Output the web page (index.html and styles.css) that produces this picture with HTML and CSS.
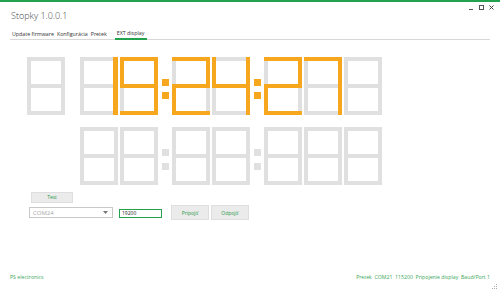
FILE: index.html
```html
<!DOCTYPE html>
<html lang="sk">
<head>
<meta charset="utf-8">
<title>Stopky 1.0.0.1</title>
<link rel="stylesheet" href="styles.css">
</head>
<body>
<div class="window">
  <div class="accent"></div>
  <header class="titlebar">
    <span class="title">Stopky 1.0.0.1</span>
    <div class="winctl">
      <svg width="5" height="5" viewBox="0 0 5 5"><rect x="0" y="4" width="4" height="1" fill="#555"/></svg>
      <svg width="5" height="5" viewBox="0 0 5 5"><rect x="0.5" y="0.5" width="4" height="4" fill="none" stroke="#555" stroke-width="1"/></svg>
      <svg width="5" height="5" viewBox="0 0 5 5"><path d="M0.5 0.5 L4.5 4.5 M4.5 0.5 L0.5 4.5" stroke="#444" stroke-width="1"/></svg>
    </div>
  </header>
  <nav class="tabs">
    <span class="tab">Update firmware</span>
    <span class="tab">Konfigurácia</span>
    <span class="tab">Pretek</span>
    <span class="tab active">EXT display</span>
  </nav>
  <main class="content">
    <div class="display">
      <div class="row">
        <svg class="digit first" viewBox="0 0 38 58"><g class="off"><rect x="0" y="0" width="38" height="4"/><rect x="34" y="0" width="4" height="31"/><rect x="34" y="27" width="4" height="31"/><rect x="0" y="54" width="38" height="4"/><rect x="0" y="27" width="4" height="31"/><rect x="0" y="0" width="4" height="31"/><rect x="0" y="27" width="38" height="4"/></g></svg>
        <svg class="digit" viewBox="0 0 38 58"><g class="off"><rect x="0" y="0" width="38" height="4"/><rect x="34" y="0" width="4" height="31"/><rect x="34" y="27" width="4" height="31"/><rect x="0" y="54" width="38" height="4"/><rect x="0" y="27" width="4" height="31"/><rect x="0" y="0" width="4" height="31"/><rect x="0" y="27" width="38" height="4"/></g><g class="on"><rect x="33" y="0" width="5" height="31"/><rect x="33" y="27" width="5" height="31"/></g></svg>
        <svg class="digit" viewBox="0 0 38 58"><g class="off"><rect x="0" y="0" width="38" height="4"/><rect x="34" y="0" width="4" height="31"/><rect x="34" y="27" width="4" height="31"/><rect x="0" y="54" width="38" height="4"/><rect x="0" y="27" width="4" height="31"/><rect x="0" y="0" width="4" height="31"/><rect x="0" y="27" width="38" height="4"/></g><g class="on"><rect x="0" y="0" width="38" height="4"/><rect x="34" y="0" width="4" height="31"/><rect x="34" y="27" width="4" height="31"/><rect x="0" y="54" width="38" height="4"/><rect x="0" y="0" width="4" height="31"/><rect x="0" y="27" width="38" height="4"/></g></svg>
        <svg class="colon" viewBox="0 0 7 58"><rect class="on-dot" x="0" y="22" width="7" height="7"/><rect class="on-dot" x="0" y="35" width="7" height="7"/></svg>
        <svg class="digit" viewBox="0 0 38 58"><g class="off"><rect x="0" y="0" width="38" height="4"/><rect x="34" y="0" width="4" height="31"/><rect x="34" y="27" width="4" height="31"/><rect x="0" y="54" width="38" height="4"/><rect x="0" y="27" width="4" height="31"/><rect x="0" y="0" width="4" height="31"/><rect x="0" y="27" width="38" height="4"/></g><g class="on"><rect x="0" y="0" width="38" height="4"/><rect x="34" y="0" width="4" height="31"/><rect x="0" y="27" width="38" height="4"/><rect x="0" y="27" width="4" height="31"/><rect x="0" y="54" width="38" height="4"/></g></svg>
        <svg class="digit" viewBox="0 0 38 58"><g class="off"><rect x="0" y="0" width="38" height="4"/><rect x="34" y="0" width="4" height="31"/><rect x="34" y="27" width="4" height="31"/><rect x="0" y="54" width="38" height="4"/><rect x="0" y="27" width="4" height="31"/><rect x="0" y="0" width="4" height="31"/><rect x="0" y="27" width="38" height="4"/></g><g class="on"><rect x="0" y="0" width="4" height="31"/><rect x="0" y="27" width="38" height="4"/><rect x="34" y="0" width="4" height="31"/><rect x="34" y="27" width="4" height="31"/></g></svg>
        <svg class="colon" viewBox="0 0 7 58"><rect class="on-dot" x="0" y="22" width="7" height="7"/><rect class="on-dot" x="0" y="35" width="7" height="7"/></svg>
        <svg class="digit" viewBox="0 0 38 58"><g class="off"><rect x="0" y="0" width="38" height="4"/><rect x="34" y="0" width="4" height="31"/><rect x="34" y="27" width="4" height="31"/><rect x="0" y="54" width="38" height="4"/><rect x="0" y="27" width="4" height="31"/><rect x="0" y="0" width="4" height="31"/><rect x="0" y="27" width="38" height="4"/></g><g class="on"><rect x="0" y="0" width="38" height="4"/><rect x="34" y="0" width="4" height="31"/><rect x="0" y="27" width="38" height="4"/><rect x="0" y="27" width="4" height="31"/><rect x="0" y="54" width="38" height="4"/></g></svg>
        <svg class="digit" viewBox="0 0 38 58"><g class="off"><rect x="0" y="0" width="38" height="4"/><rect x="34" y="0" width="4" height="31"/><rect x="34" y="27" width="4" height="31"/><rect x="0" y="54" width="38" height="4"/><rect x="0" y="27" width="4" height="31"/><rect x="0" y="0" width="4" height="31"/><rect x="0" y="27" width="38" height="4"/></g><g class="on"><rect x="0" y="0" width="38" height="4"/><rect x="34" y="0" width="4" height="31"/><rect x="34" y="27" width="4" height="31"/></g></svg>
        <svg class="digit" viewBox="0 0 38 58"><g class="off"><rect x="0" y="0" width="38" height="4"/><rect x="34" y="0" width="4" height="31"/><rect x="34" y="27" width="4" height="31"/><rect x="0" y="54" width="38" height="4"/><rect x="0" y="27" width="4" height="31"/><rect x="0" y="0" width="4" height="31"/><rect x="0" y="27" width="38" height="4"/></g></svg>
      </div>
      <div class="row">
        <svg class="digit first hidden" viewBox="0 0 38 58"></svg>
        <svg class="digit" viewBox="0 0 38 58"><g class="off"><rect x="0" y="0" width="38" height="4"/><rect x="34" y="0" width="4" height="31"/><rect x="34" y="27" width="4" height="31"/><rect x="0" y="54" width="38" height="4"/><rect x="0" y="27" width="4" height="31"/><rect x="0" y="0" width="4" height="31"/><rect x="0" y="27" width="38" height="4"/></g></svg>
        <svg class="digit" viewBox="0 0 38 58"><g class="off"><rect x="0" y="0" width="38" height="4"/><rect x="34" y="0" width="4" height="31"/><rect x="34" y="27" width="4" height="31"/><rect x="0" y="54" width="38" height="4"/><rect x="0" y="27" width="4" height="31"/><rect x="0" y="0" width="4" height="31"/><rect x="0" y="27" width="38" height="4"/></g></svg>
        <svg class="colon" viewBox="0 0 7 58"><rect class="off-dot" x="0" y="22" width="7" height="7"/><rect class="off-dot" x="0" y="36" width="7" height="7"/></svg>
        <svg class="digit" viewBox="0 0 38 58"><g class="off"><rect x="0" y="0" width="38" height="4"/><rect x="34" y="0" width="4" height="31"/><rect x="34" y="27" width="4" height="31"/><rect x="0" y="54" width="38" height="4"/><rect x="0" y="27" width="4" height="31"/><rect x="0" y="0" width="4" height="31"/><rect x="0" y="27" width="38" height="4"/></g></svg>
        <svg class="digit" viewBox="0 0 38 58"><g class="off"><rect x="0" y="0" width="38" height="4"/><rect x="34" y="0" width="4" height="31"/><rect x="34" y="27" width="4" height="31"/><rect x="0" y="54" width="38" height="4"/><rect x="0" y="27" width="4" height="31"/><rect x="0" y="0" width="4" height="31"/><rect x="0" y="27" width="38" height="4"/></g></svg>
        <svg class="colon" viewBox="0 0 7 58"><rect class="off-dot" x="0" y="22" width="7" height="7"/><rect class="off-dot" x="0" y="36" width="7" height="7"/></svg>
        <svg class="digit" viewBox="0 0 38 58"><g class="off"><rect x="0" y="0" width="38" height="4"/><rect x="34" y="0" width="4" height="31"/><rect x="34" y="27" width="4" height="31"/><rect x="0" y="54" width="38" height="4"/><rect x="0" y="27" width="4" height="31"/><rect x="0" y="0" width="4" height="31"/><rect x="0" y="27" width="38" height="4"/></g></svg>
        <svg class="digit" viewBox="0 0 38 58"><g class="off"><rect x="0" y="0" width="38" height="4"/><rect x="34" y="0" width="4" height="31"/><rect x="34" y="27" width="4" height="31"/><rect x="0" y="54" width="38" height="4"/><rect x="0" y="27" width="4" height="31"/><rect x="0" y="0" width="4" height="31"/><rect x="0" y="27" width="38" height="4"/></g></svg>
        <svg class="digit" viewBox="0 0 38 58"><g class="off"><rect x="0" y="0" width="38" height="4"/><rect x="34" y="0" width="4" height="31"/><rect x="34" y="27" width="4" height="31"/><rect x="0" y="54" width="38" height="4"/><rect x="0" y="27" width="4" height="31"/><rect x="0" y="0" width="4" height="31"/><rect x="0" y="27" width="38" height="4"/></g></svg>
      </div>
    </div>
    <div class="controls">
      <button class="btn test">Test</button>
      <div class="connect">
        <div class="combo"><span class="combo-text">COM24</span><svg class="combo-arrow" width="5" height="3" viewBox="0 0 5 3"><path d="M0 0 H5 L2.5 3 Z" fill="#777"/></svg></div>
        <div class="baud">19200</div>
        <button class="btn connect-btn">Pripojiť</button>
        <button class="btn disconnect-btn">Odpojiť</button>
      </div>
    </div>
  </main>
  <footer class="status">
    <span class="brand">PS electronics</span>
    <span class="info">Pretek&nbsp; COM21&nbsp; 115200&nbsp; Pripojenie display&nbsp; Baud/Port 1</span>
  </footer>
  <svg class="grip" width="5" height="5" viewBox="0 0 5 5"><rect x="4" y="0" width="1" height="1" fill="#aaa"/><rect x="2" y="2" width="1" height="1" fill="#aaa"/><rect x="4" y="2" width="1" height="1" fill="#aaa"/><rect x="0" y="4" width="1" height="1" fill="#aaa"/><rect x="2" y="4" width="1" height="1" fill="#aaa"/><rect x="4" y="4" width="1" height="1" fill="#aaa"/></svg>
</div>
</body>
</html>
```
FILE: styles.css
```css
* { box-sizing: border-box; }
html, body { margin: 0; padding: 0; background: #fff; }
body { font-family: "Open Sans", "Noto Sans", sans-serif; color: #333; }

.window {
  position: relative;
  width: 500px;
  height: 292px;
  overflow: hidden;
  display: flex;
  flex-direction: column;
  background: #fff;
}

.accent { height: 2px; background: #22a24c; flex: none; }

.titlebar {
  height: 26px;
  flex: none;
  display: flex;
  justify-content: space-between;
  align-items: flex-start;
  padding: 0 6px 0 11px;
}
.title {
  font-size: 9px;
  line-height: 12px;
  margin-top: 8px;
  color: #444;
  font-weight: 300;
}
.winctl { display: flex; gap: 5px; margin-top: 3px; }
.winctl svg { display: block; }

.tabs {
  flex: none;
  height: 12px;
  margin: 0 10px;
  border-bottom: 1px solid #d8d8d8;
  display: flex;
  align-items: flex-end;
  padding-left: 1px;
}
.tab {
  font-size: 5.3px;
  line-height: 10px;
  color: #333;
  padding: 0 1px;
  margin-right: 1px;
  white-space: nowrap;
}
.tab.active {
  margin-left: 6px;
  padding: 0 3px 0 2px;
  border-bottom: 2px solid #22a24c;
  margin-bottom: -1px;
  line-height: 9px;
}

.content { flex: 1; display: flex; flex-direction: column; }

.display {
  padding: 17px 0 0 27px;
  display: flex;
  flex-direction: column;
  gap: 12px;
}
.row { display: flex; }
.digit { width: 38px; height: 58px; display: block; flex: none; }
.digit + .digit { margin-left: 2px; }
.digit.first { margin-right: 13px; }
.digit.hidden { visibility: hidden; }
.colon { width: 7px; height: 58px; display: block; flex: none; margin: 0 3px 0 4px; }
.off rect { fill: #e0e0e0; }
.on rect { fill: #f7a71d; }
.on-dot { fill: #f7a71d; }
.off-dot { fill: #e0e0e0; }

.controls {
  padding: 7px 0 0 29px;
  display: flex;
  flex-direction: column;
  align-items: flex-start;
  gap: 2px;
}
.btn {
  font-family: "Open Sans", sans-serif;
  font-size: 5px;
  color: #1f9a48;
  background: #ebebeb;
  border: 1px solid #dedede;
  padding: 0;
  margin: 0;
}
.test { width: 42px; height: 11px; margin-left: 2px; line-height: 9px; }

.connect { display: flex; align-items: flex-start; }
.combo {
  width: 84px;
  height: 11px;
  margin-top: 2px;
  border: 1px solid #c8c8c8;
  display: flex;
  align-items: center;
  justify-content: space-between;
  padding: 0 4px 0 3px;
  background: #fff;
}
.combo-text { font-size: 6px; color: #a8a8a8; }
.combo-arrow { display: block; }
.baud {
  width: 43px;
  height: 9px;
  margin: 4px 0 0 6px;
  border: 1px solid #22a24c;
  font-size: 5px;
  line-height: 7px;
  padding-left: 2px;
  color: #222;
}
.connect-btn { width: 38px; height: 15px; margin-left: 9px; }
.disconnect-btn { width: 38px; height: 15px; margin-left: 2px; }

.status {
  flex: none;
  height: 24px;
  display: flex;
  justify-content: space-between;
  align-items: flex-start;
  padding: 6px 10px 0 10px;
  font-size: 5.2px;
  line-height: 6px;
  color: #3aa65a;
}
.grip { position: absolute; right: 3px; bottom: 3px; display: block; }
```
